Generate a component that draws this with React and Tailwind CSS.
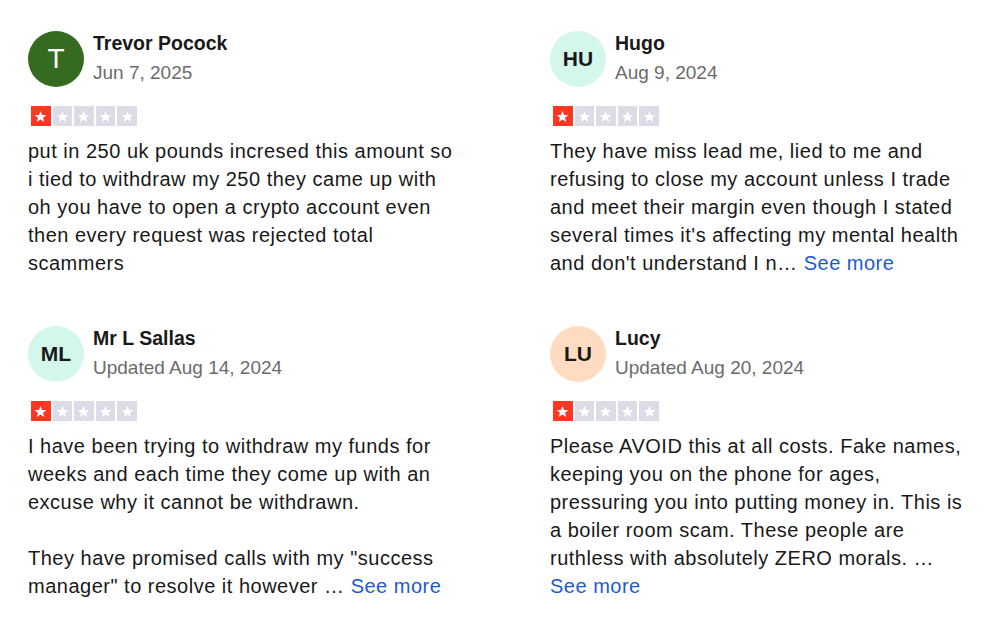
const reviews = [
  {
    name: 'Trevor Pocock',
    date: 'Jun 7, 2025',
    initials: 'T',
    avatar: 'bg-[#356b21] text-white font-normal text-[28px]',
    body: ['put in 250 uk pounds incresed this amount so i tied to withdraw my 250 they came up with oh you have to open a crypto account even then every request was rejected total scammers'],
  },
  {
    name: 'Hugo',
    date: 'Aug 9, 2024',
    initials: 'HU',
    avatar: 'bg-[#d3f7ea] text-[#191919] font-bold text-[21px]',
    body: ["They have miss lead me, lied to me and refusing to close my account unless I trade and meet their margin even though I stated several times it's affecting my mental health and don't understand I n…"],
    more: true,
  },
  {
    name: 'Mr L Sallas',
    date: 'Updated Aug 14, 2024',
    initials: 'ML',
    avatar: 'bg-[#d3f7ea] text-[#191919] font-bold text-[21px]',
    body: [
      'I have been trying to withdraw my funds for weeks and each time they come up with an excuse why it cannot be withdrawn.',
      'They have promised calls with my "success manager" to resolve it however …',
    ],
    more: true,
  },
  {
    name: 'Lucy',
    date: 'Updated Aug 20, 2024',
    initials: 'LU',
    avatar: 'bg-[#ffdcc1] text-[#191919] font-bold text-[21px]',
    body: ['Please AVOID this at all costs. Fake names, keeping you on the phone for ages, pressuring you into putting money in. This is a boiler room scam. These people are ruthless with absolutely ZERO morals. …'],
    more: true,
  },
]

function Star() {
  return (
    <svg viewBox="0 0 20 20" className="w-[13px] h-[13px]" fill="white">
      <path d="M10 1.5l2.4 6.1 6.6.3-5.1 4.1 1.8 6.4L10 14.7l-5.7 3.7 1.8-6.4L1 7.9l6.6-.3z" />
    </svg>
  )
}

function Stars() {
  return (
    <div className="flex gap-[2px] ml-[3px]">
      {[0, 1, 2, 3, 4].map((i) => (
        <div
          key={i}
          className={`w-[19.6px] h-[20px] flex items-center justify-center ${i === 0 ? 'bg-[#ff3722]' : 'bg-[#dcdce6]'}`}
        >
          <Star />
        </div>
      ))}
    </div>
  )
}

function Review({ r }) {
  return (
    <div>
      <div className="flex gap-[9px]">
        <div className={`w-[56px] h-[56px] rounded-full flex items-center justify-center shrink-0 ${r.avatar}`}>
          {r.initials}
        </div>
        <div>
          <p className="text-[19.5px] leading-6 font-bold text-[#191919]">{r.name}</p>
          <p className="mt-1.5 text-[19px] leading-6 text-[#6b6b6b]">{r.date}</p>
        </div>
      </div>
      <div className="mt-[19px]">
        <Stars />
      </div>
      <div className="mt-[11px] text-[20px] leading-[28px] text-[#191919] tracking-[0.5px]">
        {r.body.map((para, i) => (
          <p key={i} className={i > 0 ? 'mt-[28px]' : ''}>
            {para}
            {r.more && i === r.body.length - 1 && (
              <>
                {' '}
                <span className="text-[#1c5ad4]">See more</span>
              </>
            )}
          </p>
        ))}
      </div>
    </div>
  )
}

export default function App() {
  return (
    <div className="min-h-screen bg-white pl-[28px] pt-[31px] font-['Liberation_Sans',Arial,sans-serif]">
      <div className="grid grid-cols-[425px_425px] gap-x-[97px] gap-y-[49px]">
        {reviews.map((r) => (
          <Review key={r.name} r={r} />
        ))}
      </div>
    </div>
  )
}
